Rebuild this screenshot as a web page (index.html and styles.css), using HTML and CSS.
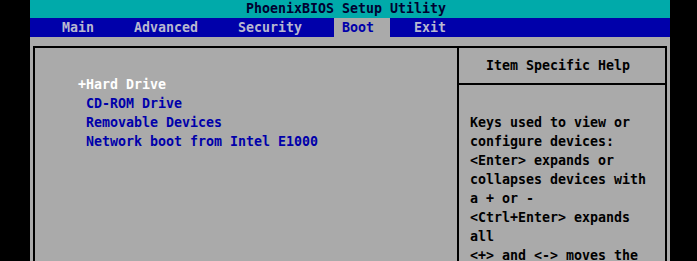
FILE: index.html
```html
<!DOCTYPE html>
<html lang="en">
<head>
    <meta charset="UTF-8">
    <title>PhoenixBIOS Setup Utility</title>
    <link rel="stylesheet" href="styles.css">
</head>
<body>
    <div class="screen">
        <div class="title-bar">PhoenixBIOS Setup Utility</div>

        <div class="menu-bar">
            <span class="tab tab-main">Main</span>
            <span class="tab tab-advanced">Advanced</span>
            <span class="tab tab-security">Security</span>
            <span class="tab tab-boot active">Boot</span>
            <span class="tab tab-exit">Exit</span>
        </div>

        <div class="body-area">
            <div class="panel">
                <div class="boot-list">
                    <div class="boot-item selected">+Hard Drive</div>
                    <div class="boot-item">CD-ROM Drive</div>
                    <div class="boot-item">Removable Devices</div>
                    <div class="boot-item">Network boot from Intel E1000</div>
                </div>

                <div class="help-pane">
                    <div class="help-title">Item Specific Help</div>
                    <div class="help-text">
                        <div class="help-line">Keys used to view or</div>
                        <div class="help-line">configure devices:</div>
                        <div class="help-line">&lt;Enter&gt; expands or</div>
                        <div class="help-line">collapses devices with</div>
                        <div class="help-line">a + or -</div>
                        <div class="help-line">&lt;Ctrl+Enter&gt; expands</div>
                        <div class="help-line">all</div>
                        <div class="help-line">&lt;+&gt; and &lt;-&gt; moves the</div>
                    </div>
                </div>
            </div>
        </div>
    </div>
</body>
</html>
```

FILE: styles.css
```css
* {
    margin: 0;
    padding: 0;
    box-sizing: border-box;
}

html, body {
    height: 100%;
    overflow: hidden;
}

body {
    background: #000;
    font-family: 'DejaVu Sans Mono', 'Liberation Mono', monospace;
    font-size: 13.29px;
    font-weight: bold;
}

.screen {
    width: 640px;
    height: 480px;
    margin-left: 30px;
    margin-top: -1.5px;
    background: #aaaaaa;
    display: flex;
    flex-direction: column;
}

.title-bar,
.tab,
.boot-item,
.help-title,
.help-line {
    white-space: pre;
}

.title-bar {
    height: 19px;
    line-height: 19px;
    background: #00aaaa;
    color: #000030;
    padding-left: 216px;
}

.menu-bar {
    height: 19px;
    line-height: 19px;
    background: #0000aa;
    color: #b8b8d0;
    display: flex;
}

.tab {
    display: block;
}

.tab-main { margin-left: 32px; }
.tab-advanced { margin-left: 40px; }
.tab-security { margin-left: 40px; }

.tab-boot {
    margin-left: 32px;
    padding: 0 16px 0 8px;
}

.tab-boot.active {
    background: #aaaaaa;
    color: #0000aa;
}

.tab-exit { margin-left: 24px; }

.body-area {
    flex: 1;
    padding: 9.5px 3px 0 3px;
}

.panel {
    height: 100%;
    border: 2px solid #000;
    display: flex;
}

.boot-list {
    width: 422px;
    padding-top: 26.5px;
    padding-left: 43px;
    line-height: 19px;
    color: #0000aa;
}

.boot-item {
    padding-left: 8px;
}

.boot-item.selected {
    padding-left: 0;
    color: #ffffff;
}

.help-pane {
    flex: 1;
    border-left: 2px solid #000;
    color: #000;
    line-height: 19px;
}

.help-title {
    padding: 7.5px 0 0 27px;
    height: 37px;
    border-bottom: 2px solid #000;
}

.help-text {
    padding: 27.5px 0 0 11px;
}
```
